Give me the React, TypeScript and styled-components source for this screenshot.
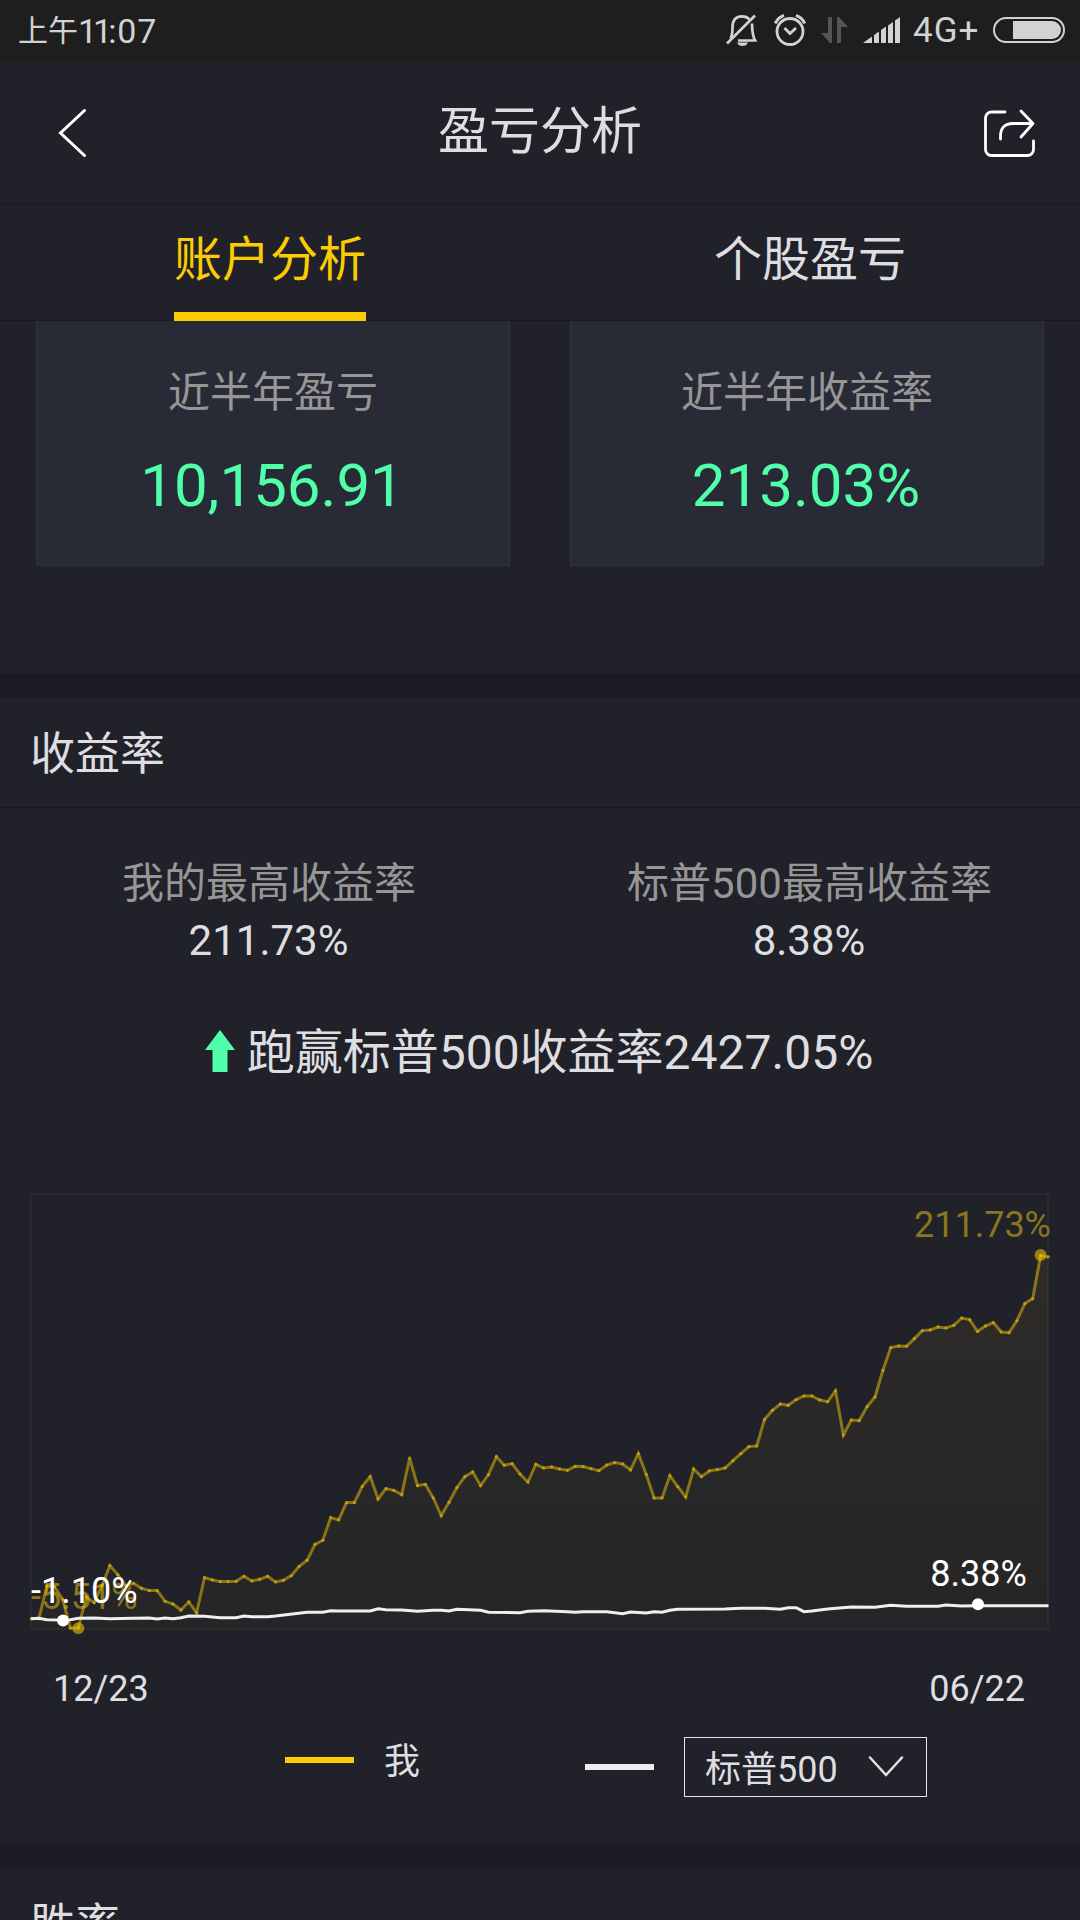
import React from "react";
import styled, { createGlobalStyle } from "styled-components";

const GlobalStyle = createGlobalStyle`
  * { box-sizing: border-box; }
  html, body { margin: 0; padding: 0; background: #21212a; }
`;

const color = {
  page: "#21212a",
  status: "#1e1e1e",
  band: "#1b1b23",
  line: "#191920",
  card: "#282a35",
  cardEdge: "#2c2f3a",
  text: "#dedee0",
  muted: "#969696",
  accent: "#f9cc04",
  gain: "#50ffaa",
};

const Screen = styled.div`
  width: 1080px;
  height: 1920px;
  overflow: hidden;
  display: flex;
  flex-direction: column;
  background: ${color.page};
  color: ${color.text};
  font-family: Roboto, "Noto Sans CJK SC", sans-serif;
  font-weight: 400;
`;

const StatusBar = styled.div`
  flex: none;
  height: 60px;
  padding: 0 15px 0 18px;
  display: flex;
  align-items: center;
  justify-content: space-between;
  background: ${color.status};
  color: #d2d2d2;
`;

const Clock = styled.div`
  display: flex;
  align-items: center;
  font-size: 34px;
  line-height: 60px;
  padding-top: 2px;
`;

const Meridiem = styled.span`
  font-size: 30px;
`;

const Ones = styled.span`
  letter-spacing: -4px;
`;

const Digits = styled.span`
  letter-spacing: 0.8px;
`;

const StatusIcons = styled.div`
  display: flex;
  align-items: center;
`;

const StatusIcon = styled.svg<{ $gap?: number }>`
  display: block;
  flex: none;
  margin-right: ${(p) => p.$gap ?? 0}px;
`;

const Network = styled.span`
  width: 66px;
  margin-right: 14px;
  font-size: 35px;
  line-height: 60px;
  letter-spacing: 1px;
  padding-top: 2px;
  white-space: nowrap;
`;

const Header = styled.header`
  flex: none;
  height: 144px;
  padding: 0 43px;
  display: grid;
  grid-template-columns: 1fr auto 1fr;
  align-items: center;
  border-bottom: 1px solid ${color.line};
`;

const Title = styled.h1`
  margin: 0;
  font-size: 51px;
  line-height: 60px;
  font-weight: 400;
`;

const IconButton = styled.button<{ $end?: boolean }>`
  justify-self: ${(p) => (p.$end ? "end" : "start")};
  padding: 0 0 0 ${(p) => (p.$end ? 0 : 13)}px;
  border: 0;
  background: none;
  line-height: 0;
`;

const Tabs = styled.nav`
  flex: none;
  height: 117px;
  display: grid;
  grid-template-columns: 1fr 1fr;
  justify-items: center;
  border-bottom: 1px solid ${color.line};
`;

const Tab = styled.button<{ $active?: boolean }>`
  height: 117px;
  padding: 3px 0 0;
  border: 0;
  border-bottom: 9px solid ${(p) => (p.$active ? color.accent : "transparent")};
  background: none;
  color: ${(p) => (p.$active ? color.accent : color.text)};
  font: inherit;
  font-size: 48px;
  line-height: 60px;
`;

const Summary = styled.section`
  flex: none;
  height: 353px;
  padding: 0 36px;
  display: grid;
  grid-template-columns: 1fr 1fr;
  column-gap: 60px;
  align-items: start;
`;

const Card = styled.div`
  height: 245px;
  padding-top: 47px;
  display: flex;
  flex-direction: column;
  align-items: center;
  gap: 33px;
  background: ${color.card};
  border: 2px solid ${color.cardEdge};
  border-top: 0;
`;

const Label = styled.div`
  font-size: 42px;
  line-height: 50px;
  color: ${color.muted};
`;

const CardValue = styled.div`
  padding-right: 2px;
  font-size: 60px;
  line-height: 70px;
  color: ${color.gain};
`;

const Band = styled.div`
  flex: none;
  height: 24px;
  background: ${color.band};
`;

const SectionTitle = styled.h2`
  flex: none;
  margin: 0;
  height: 110px;
  padding: 2px 0 0 30px;
  font-size: 45px;
  line-height: 109px;
  font-weight: 400;
  border-bottom: 1px solid ${color.line};
`;

const Stats = styled.div`
  flex: none;
  margin-top: 47px;
  height: 112px;
  display: grid;
  grid-template-columns: 1fr 1fr;
`;

const Stat = styled.div<{ $divided?: boolean }>`
  padding: 4px 1px 0 0;
  display: flex;
  flex-direction: column;
  align-items: center;
  gap: 7px;
  border-right: ${(p) => (p.$divided ? "1px solid #1d1d25" : "0")};
`;

const StatValue = styled.div`
  padding-right: 1px;
  font-size: 42px;
  line-height: 50px;
`;

const Outperform = styled.div`
  flex: none;
  margin-top: 56px;
  height: 60px;
  padding-right: 2px;
  display: flex;
  align-items: center;
  justify-content: center;
  gap: 12px;
  font-size: 48px;
  line-height: 60px;
  white-space: nowrap;
`;

const UpArrow = styled.svg`
  display: block;
  margin-bottom: 5px;
`;

const ChartSvg = styled.svg`
  display: block;
  flex: none;
  margin-top: 110px;
  overflow: visible;
  font-size: 36px;
`;

const Axis = styled.div`
  flex: none;
  margin-top: 37px;
  padding: 0 55px 0 53px;
  display: flex;
  justify-content: space-between;
  font-size: 36px;
  line-height: 44px;
`;

const Legend = styled.div`
  flex: none;
  margin-top: 26px;
  height: 108px;
  padding-left: 285px;
  display: flex;
  align-items: flex-start;
  gap: 165px;
  font-size: 36px;
  line-height: 44px;
`;

const LegendItem = styled.div<{ $height: number }>`
  height: ${(p) => p.$height}px;
  display: flex;
  align-items: center;
  gap: 30px;
`;

const LegendName = styled.span`
  padding-top: 4px;
`;

const Swatch = styled.i<{ $color: string }>`
  width: 69px;
  height: 6px;
  background: ${(p) => p.$color};
`;

const IndexSelect = styled.button`
  width: 243px;
  height: 60px;
  padding: 2px 22px 0 20px;
  display: flex;
  align-items: center;
  justify-content: space-between;
  border: 1px solid #e4e4e6;
  background: none;
  color: ${color.text};
  font: inherit;
  line-height: 44px;
  white-space: nowrap;
`;

const Chevron = styled.svg`
  display: block;
  margin-bottom: 2px;
`;

const CHART_TOP = 1193;
const LEFT = 31;
const STEP = 1017.5 / 129;

// Plot heights are stored in thirds of a pixel, offset from each segment's base line.
const mineLower = [
  655, 655, 557, 560, 597, 683, 683, 590, 607, 555, 496, 523, 556, 549, 564, 571, 571, 603, 611, 629,
  605, 637, 532, 539, 544, 544, 543, 528, 542, 537, 528, 545, 540, 526, 498, 480, 432, 420, 352, 359,
  307, 307, 258, 229, 296, 265, 270, 283, 173, 256, 252, 293, 346, 306, 262, 229, 215, 256, 223, 169,
  195, 190, 221, 245, 192, 203, 200, 206, 210, 198, 199, 205, 211, 194, 187, 191, 209, 160, 222, 293,
  293, 226, 259, 290, 206, 229, 212, 208, 203, 181, 160, 139, 137,
];
const mineUpper = [
  718, 690, 671, 675, 658, 647, 647, 659, 664, 632, 764, 719, 721, 679, 650, 570, 502, 497, 498, 475,
  451, 449, 440, 443, 435, 413, 418, 453, 437, 427, 455, 457, 421, 370, 355, 226, 230,
];
const indexKeys: [number, number][] = [
  [0, 656], [1, 655], [2, 659], [4, 660], [5, 659], [6, 655], [8, 654], [10, 656], [13, 655], [15, 654],
  [16, 657], [17, 654], [18, 656], [19, 653], [20, 648], [22, 649], [24, 653], [26, 653], [27, 648],
  [28, 650], [30, 650], [31, 648], [35, 637], [37, 637], [38, 632], [39, 633], [43, 633], [44, 626],
  [45, 629], [47, 630], [49, 634], [51, 631], [52, 631], [53, 633], [54, 628], [57, 631], [58, 637],
  [62, 638], [63, 634], [65, 632], [68, 635], [69, 637], [70, 635], [73, 635], [74, 638], [75, 641],
  [76, 636], [78, 639], [79, 635], [80, 637], [81, 631], [82, 628], [88, 627], [90, 625], [93, 625],
  [95, 628], [96, 623], [97, 623], [98, 635], [99, 633], [101, 627], [104, 621], [107, 622], [109, 616],
  [111, 619], [115, 619], [116, 615], [118, 618], [120, 617], [129, 617],
];

const xAt = (i: number) => LEFT + STEP * i;
const mine = [
  ...mineLower.map((v) => 1400 + v / 3),
  ...mineUpper.map((v) => 1180 + v / 3),
].map((y, i) => ({ x: xAt(i), y: y + 0.3 - CHART_TOP }));
const benchmark = indexKeys.map(([i, v]) => ({ x: xAt(i), y: 1400 + v / 3 - CHART_TOP }));

const toPoints = (pts: { x: number; y: number }[]) =>
  pts.map((p) => `${p.x.toFixed(1)},${p.y.toFixed(1)}`).join(" ");

function ReturnChart() {
  return (
    <ChartSvg width="1080" height="437" viewBox="0 0 1080 437">
      <defs>
        <linearGradient id="area" x1="0" y1="62" x2="0" y2="437" gradientUnits="userSpaceOnUse">
          <stop offset="0" stopColor="#2e2b28" />
          <stop offset="1" stopColor="#252527" />
        </linearGradient>
      </defs>
      <polygon points={`31,436 ${toPoints(mine)} 1048.5,436`} fill="url(#area)" />
      <rect x="31" y="1" width="1017" height="435" fill="none" stroke="#fff" strokeOpacity="0.04" strokeWidth="2" />
      <text x="31" y="416" fill="#8a761b">-5.51%</text>
      <polyline points={toPoints(mine)} fill="none" stroke="#f9cc04" strokeOpacity="0.48" strokeWidth="3" />
      {mine.map((p, i) => (
        <circle key={i} cx={p.x} cy={p.y} r="1.6" fill="#f9cc04" fillOpacity="0.5" />
      ))}
      <circle cx={xAt(6)} cy="435.3" r="6" fill="#f9cc04" fillOpacity="0.55" />
      <circle cx={xAt(128)} cy="62" r="6" fill="#f9cc04" fillOpacity="0.55" />
      <polyline points={toPoints(benchmark)} fill="none" stroke="#efefed" strokeWidth="3" />
      <circle cx={xAt(4) + 0.5} cy="427.5" r="6" fill="#fff" />
      <circle cx={xAt(120) + 0.5} cy="411.3" r="6" fill="#fff" />
      <text x="31" y="410" fill="#fff">-1.10%</text>
      <text x="978.5" y="393" fill="#fff" textAnchor="middle">8.38%</text>
      <text x="1051" y="44" fill="#8a761f" textAnchor="end">211.73%</text>
    </ChartSvg>
  );
}

function StatusGlyphs() {
  return (
    <StatusIcons>
      <StatusIcon $gap={16} width="32" height="34" viewBox="0 0 32 34" fill="none" stroke="#d2d2d2" strokeWidth="2.7">
        <path d="M4.5 25.5C6.5 22 6.5 19 6.5 14 6.5 7 10 3.3 16 3.3c3.2 0 5.6 1 7.4 3" />
        <path d="M26 10.5c.3 7.500.2 12 3 17H12" />
        <path d="M1 30.500 29 2.500" />
        <path d="M11 29.500h11c-1 2.500-3 3.500-5.500 3.500s-4.500-1-5.500-3.500z" fill="#d2d2d2" stroke="none" />
      </StatusIcon>
      <StatusIcon $gap={15} width="32" height="34" viewBox="0 0 32 34" fill="none" stroke="#d2d2d2" strokeWidth="2.8">
        <circle cx="16" cy="18.500" r="13" />
        <path d="M10.500 15l5.500 5.500 6-5.500" />
        <path d="M1.300 10.500C3 6.500 6 3.700 10 2.300M30.700 10.500C29 6.500 26 3.700 22 2.300" strokeWidth="3" />
      </StatusIcon>
      <StatusIcon $gap={15} width="27" height="28" viewBox="0 0 27 28" fill="#555">
        <path d="M8 1h3v26H9L0 17h7V2zM18 1l9 10h-7v15l-1 1h-3V1z" />
      </StatusIcon>
      <StatusIcon $gap={12} width="38" height="26" viewBox="0 0 38 26" fill="#d2d2d2">
        <path d="M0 26l9-6.500V26zM11 18l5-3.500V26h-5zM18 13l5-3.500V26h-5zM25 8.500l5-3.500V26h-5zM32 3.500L37 0v26h-5z" />
      </StatusIcon>
      <Network>4G+</Network>
      <StatusIcon width="72" height="26" viewBox="0 0 72 26">
        <rect x="1" y="1" width="70" height="24" rx="12" fill="none" stroke="#d2d2d2" strokeWidth="2" />
        <path d="M20 4h39a9 9 0 0 1 0 18H20z" fill="#d2d2d2" />
      </StatusIcon>
    </StatusIcons>
  );
}

export default function App() {
  return (
    <>
      <GlobalStyle />
      <Screen>
        <StatusBar>
          <Clock>
            <Meridiem>上午</Meridiem>
            <Ones>11</Ones>
            <Digits>:07</Digits>
          </Clock>
          <StatusGlyphs />
        </StatusBar>

        <Header>
          <IconButton aria-label="返回">
            <svg width="32" height="50" viewBox="0 0 32 50" fill="none" stroke="#fff" strokeWidth="3" strokeLinecap="round">
              <path d="M28.500 3.500L4.500 26l24 22.500" />
            </svg>
          </IconButton>
          <Title>盈亏分析</Title>
          <IconButton $end aria-label="分享">
            <svg width="54" height="50" viewBox="0 0 54 50" fill="none" stroke="#fff" strokeWidth="2.800" strokeLinecap="round" strokeLinejoin="round">
              <path d="M22 5H8.500a6 6 0 0 0-6 6v31.500a6 6 0 0 0 6 6h36a6 6 0 0 0 6-6V34" />
              <path d="M17.500 32v-3C17.500 21 22 16.500 30 16.500h19.500" />
              <path d="M38 4l12 12.500L38 30" />
            </svg>
          </IconButton>
        </Header>

        <Tabs>
          <Tab $active>账户分析</Tab>
          <Tab>个股盈亏</Tab>
        </Tabs>

        <Summary>
          <Card>
            <Label>近半年盈亏</Label>
            <CardValue>10,156.91</CardValue>
          </Card>
          <Card>
            <Label>近半年收益率</Label>
            <CardValue>213.03%</CardValue>
          </Card>
        </Summary>

        <Band />
        <SectionTitle>收益率</SectionTitle>
        <Stats>
          <Stat $divided>
            <Label>我的最高收益率</Label>
            <StatValue>211.73%</StatValue>
          </Stat>
          <Stat>
            <Label>标普500最高收益率</Label>
            <StatValue>8.38%</StatValue>
          </Stat>
        </Stats>
        <Outperform>
          <UpArrow width="30" height="42" viewBox="0 0 30 42" fill={color.gain}>
            <path d="M15 0l15 20h-7.500v22h-15V20H0z" />
          </UpArrow>
          <span>跑赢标普500收益率2427.05%</span>
        </Outperform>

        <ReturnChart />
        <Axis>
          <span>12/23</span>
          <span>06/22</span>
        </Axis>
        <Legend>
          <LegendItem $height={46}>
            <Swatch $color={color.accent} />
            <LegendName>我</LegendName>
          </LegendItem>
          <LegendItem $height={60}>
            <Swatch $color="#ededed" />
            <IndexSelect>
              <LegendName>标普500</LegendName>
              <Chevron width="36" height="22" viewBox="0 0 36 22" fill="none" stroke="#e4e4e6" strokeWidth="2.500" strokeLinecap="round">
                <path d="M2 1.500l16 17.500L34 1.500" />
              </Chevron>
            </IndexSelect>
          </LegendItem>
        </Legend>

        <Band />
        <SectionTitle>胜率</SectionTitle>
      </Screen>
    </>
  );
}
